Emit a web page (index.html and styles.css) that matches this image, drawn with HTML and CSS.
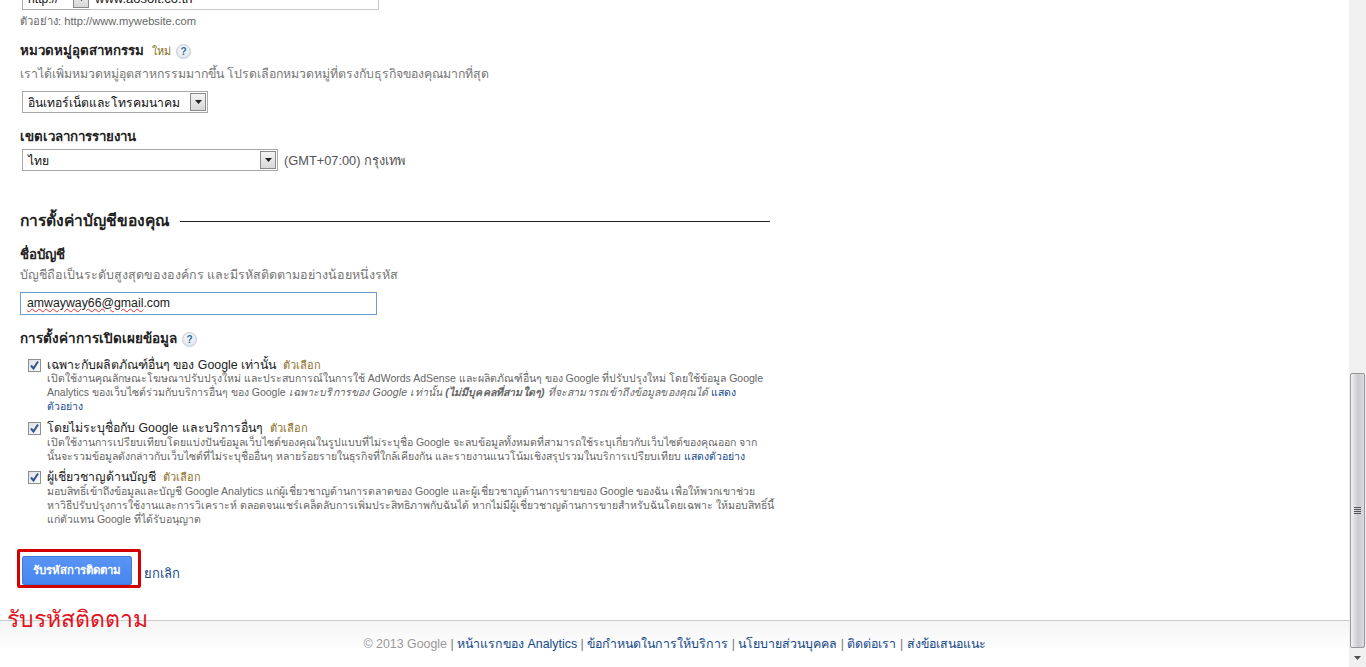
FILE: index.html
```html
<!DOCTYPE html>
<html lang="th">
<head>
<meta charset="utf-8">
<title>Google Analytics</title>
<link rel="stylesheet" href="styles.css">
</head>
<body>
<div class="window">
  <div class="page">
    <main class="content">
      <div class="url-row">
        <div class="select select-proto"><span class="select-text">http://</span><span class="arrow"><svg width="7" height="4" viewBox="0 0 7 4"><path d="M0 0h7L3.5 4z" fill="#222"/></svg></span></div>
        <div class="url-input">www.aosoit.co.th</div>
      </div>
      <p class="example">ตัวอย่าง: http://www.mywebsite.com</p>

      <div class="field-title title-industry"><b>หมวดหมู่อุตสาหกรรม</b><span class="tag-new">ใหม่</span><span class="help">?</span></div>
      <p class="desc">เราได้เพิ่มหมวดหมู่อุตสาหกรรมมากขึ้น โปรดเลือกหมวดหมู่ที่ตรงกับธุรกิจของคุณมากที่สุด</p>
      <div class="select select-industry"><span class="select-text">อินเทอร์เน็ตและโทรคมนาคม</span><span class="arrow"><svg width="7" height="4" viewBox="0 0 7 4"><path d="M0 0h7L3.5 4z" fill="#222"/></svg></span></div>

      <div class="field-title title-zone"><b>เขตเวลาการรายงาน</b></div>
      <div class="zone-row">
        <div class="select select-zone"><span class="select-text">ไทย</span><span class="arrow"><svg width="7" height="4" viewBox="0 0 7 4"><path d="M0 0h7L3.5 4z" fill="#222"/></svg></span></div>
        <span class="zone-label">(GMT+07:00) กรุงเทพ</span>
      </div>

      <div class="section-head"><h2>การตั้งค่าบัญชีของคุณ</h2><span class="rule"></span></div>

      <div class="field-title title-account"><b>ชื่อบัญชี</b></div>
      <p class="desc desc-account">บัญชีถือเป็นระดับสูงสุดขององค์กร และมีรหัสติดตามอย่างน้อยหนึ่งรหัส</p>
      <div class="account-input"><span class="misspelt">amwayway66@gmail</span>.com</div>

      <div class="field-title title-share"><b>การตั้งค่าการเปิดเผยข้อมูล</b><span class="help">?</span></div>

      <div class="option option-first">
        <span class="check"><svg width="11" height="11" viewBox="0 0 11 11"><path d="M2 5.5l2.5 3L9 1.5" fill="none" stroke="#34558f" stroke-width="2"/></svg></span>
        <div class="option-body">
          <div class="option-title">เฉพาะกับผลิตภัณฑ์อื่นๆ ของ Google เท่านั้น<span class="tag">ตัวเลือก</span></div>
          <p class="option-text">เปิดใช้งานคุณลักษณะโฆษณาปรับปรุงใหม่ และประสบการณ์ในการใช้ AdWords AdSense และผลิตภัณฑ์อื่นๆ ของ Google ที่ปรับปรุงใหม่ โดยใช้ข้อมูล Google<br>Analytics ของเว็บไซต์ร่วมกับบริการอื่นๆ ของ Google <i>เฉพาะบริการของ Google เท่านั้น <b>(ไม่มีบุคคลที่สามใดๆ)</b> ที่จะสามารถเข้าถึงข้อมูลของคุณได้</i> <a href="#">แสดง<br>ตัวอย่าง</a></p>
        </div>
      </div>
      <div class="option option-second">
        <span class="check"><svg width="11" height="11" viewBox="0 0 11 11"><path d="M2 5.5l2.5 3L9 1.5" fill="none" stroke="#34558f" stroke-width="2"/></svg></span>
        <div class="option-body">
          <div class="option-title">โดยไม่ระบุชื่อกับ Google และบริการอื่นๆ<span class="tag">ตัวเลือก</span></div>
          <p class="option-text">เปิดใช้งานการเปรียบเทียบโดยแบ่งปันข้อมูลเว็บไซต์ของคุณในรูปแบบที่ไม่ระบุชื่อ Google จะลบข้อมูลทั้งหมดที่สามารถใช้ระบุเกี่ยวกับเว็บไซต์ของคุณออก จาก<br>นั้นจะรวมข้อมูลดังกล่าวกับเว็บไซต์ที่ไม่ระบุชื่ออื่นๆ หลายร้อยรายในธุรกิจที่ใกล้เคียงกัน และรายงานแนวโน้มเชิงสรุปรวมในบริการเปรียบเทียบ <a href="#">แสดงตัวอย่าง</a></p>
        </div>
      </div>
      <div class="option option-third">
        <span class="check"><svg width="11" height="11" viewBox="0 0 11 11"><path d="M2 5.5l2.5 3L9 1.5" fill="none" stroke="#34558f" stroke-width="2"/></svg></span>
        <div class="option-body">
          <div class="option-title">ผู้เชี่ยวชาญด้านบัญชี<span class="tag">ตัวเลือก</span></div>
          <p class="option-text">มอบสิทธิ์เข้าถึงข้อมูลและบัญชี Google Analytics แก่ผู้เชี่ยวชาญด้านการตลาดของ Google และผู้เชี่ยวชาญด้านการขายของ Google ของฉัน เพื่อให้พวกเขาช่วย<br>หาวิธีปรับปรุงการใช้งานและการวิเคราะห์ ตลอดจนแชร์เคล็ดลับการเพิ่มประสิทธิภาพกับฉันได้ หากไม่มีผู้เชี่ยวชาญด้านการขายสำหรับฉันโดยเฉพาะ ให้มอบสิทธิ์นี้<br>แก่ตัวแทน Google ที่ได้รับอนุญาต</p>
        </div>
      </div>

      <div class="actions">
        <div class="highlight"><button class="primary" type="button">รับรหัสการติดตาม</button></div>
        <a class="cancel" href="#">ยกเลิก</a>
      </div>
    </main>
    <footer class="footer">
      <span class="copy">© 2013 Google</span> | <a href="#">หน้าแรกของ Analytics</a> | <a href="#">ข้อกำหนดในการให้บริการ</a> | <a href="#">นโยบายส่วนบุคคล</a> | <a href="#">ติดต่อเรา</a> | <a href="#">ส่งข้อเสนอแนะ</a>
    </footer>
    <div class="annotation">รับรหัสติดตาม</div>
  </div>
  <div class="scrollbar">
    <div class="track"><div class="thumb"><span class="grip"></span></div></div>
    <div class="scroll-btn"><svg width="7" height="4" viewBox="0 0 7 4"><path d="M0 0h7L3.5 4z" fill="#505050"/></svg></div>
  </div>
</div>
</body>
</html>
```
FILE: styles.css
```css
* { box-sizing: border-box; }
html, body { margin: 0; height: 100%; overflow: hidden; background: #fff; }
body { font-family: "Liberation Sans", "Noto Sans", Arial, sans-serif; color: #333; }
.window { display: flex; width: 1366px; height: 667px; }
.page { position: relative; flex: 1; display: flex; flex-direction: column; overflow: hidden; }
.content { flex: 1; padding-left: 20px; margin-top: -12px; }
p { margin: 0; }
a { color: #15498a; text-decoration: none; }

.url-row { display: flex; margin-left: 2px; height: 22px; }
.select { display: flex; align-items: stretch; height: 22px; border: 1px solid #a9a9a9; background: #fff; font-size: 12.2px; color: #111; }
.select-text { flex: 1; padding-left: 5px; line-height: 22px; white-space: nowrap; overflow: hidden; }
.select-proto .select-text { line-height: 20px; }
.arrow { flex: none; width: 16px; margin: 1px; display: flex; align-items: center; justify-content: center; background: linear-gradient(#f4f4f4, #d8d8d8); border: 1px solid #8a8a8a; }
.select-proto { width: 68px; border-right: 0; }
.url-input { width: 289px; height: 22px; border: 1px solid #c8c8c8; border-left: 0; padding-left: 5px; font-size: 13px; line-height: 20px; color: #222; }
.example { margin-top: 5px; font-size: 11.2px; line-height: 13px; color: #666; }

.field-title { font-size: 13.3px; line-height: 18px; color: #222; display: flex; align-items: center; }
.field-title b { font-weight: 700; }
.title-industry { margin-top: 14px; }
.tag-new { margin-left: 8px; font-size: 10.8px; color: #8a6d1c; }
.help { width: 15px; height: 15px; margin-left: 5px; border-radius: 50%; border: 1px solid #c4ccd6; background: radial-gradient(circle at 50% 35%, #fff, #d5dde6); color: #2a6a9e; font-size: 10px; font-weight: 700; line-height: 13px; text-align: center; }
.desc { margin-top: 6px; font-size: 12.3px; line-height: 16px; color: #777; }
.select-industry { width: 186px; margin: 9px 0 0 2px; }
.title-zone { margin-top: 15px; }
.zone-row { display: flex; align-items: center; margin: 3px 0 0 2px; }
.select-zone { width: 256px; }
.zone-label { margin-left: 6px; font-size: 12.8px; color: #555; }

.section-head { display: flex; align-items: center; margin-top: 41px; width: 750px; }
.section-head h2 { margin: 0; font-size: 15.6px; line-height: 18px; font-weight: 700; color: #222; }
.rule { flex: 1; height: 1px; margin-left: 11px; background: #222; }
.title-account { margin-top: 16px; }
.desc-account { margin-top: 3px; font-size: 12.5px; }
.account-input { width: 357px; height: 23px; margin-top: 9px; border: 1px solid #6d9bd1; padding-left: 6px; font-size: 12.3px; line-height: 21px; color: #222; }
.misspelt { text-decoration: underline wavy #d33 1px; }
.title-share { margin-top: 15px; font-size: 13.5px; }

.option { display: flex; margin-left: 8px; width: 742px; }
.option-first { margin-top: 9px; }
.option-second { margin-top: 8px; }
.option-third { margin-top: 7px; }
.check { flex: none; width: 13px; height: 13px; margin: 2px 6px 0 0; border: 1px solid #8e8f8f; background: linear-gradient(135deg, #dfe1e5, #fbfbfc); display: flex; align-items: center; justify-content: center; }
.option-second .check, .option-third .check { margin-top: 1px; }
.option-body { flex: 1; min-width: 0; }
.option-title { font-size: 12.35px; line-height: 16px; margin-bottom: -2px; color: #222; white-space: nowrap; }
.option-second .option-title, .option-third .option-title { line-height: 14px; margin-bottom: 0; }
.tag { margin-left: 7px; font-size: 11px; color: #8a6d1c; }
.option-text { font-size: 10.5px; line-height: 14px; color: #666; white-space: nowrap; }
.option-text i { letter-spacing: 0.15px; }

.actions { display: flex; align-items: center; margin: 23px 0 0 -3px; }
.highlight { width: 124px; height: 39px; padding: 4px 0 0 2px; border: 3px solid #d40000; border-radius: 2px; }
.primary { display: block; width: 110px; height: 29px; padding: 0; border: 1px solid #3d79d6; border-radius: 2px; background: linear-gradient(#5a95f5, #4685ee); color: #fff; font: 700 11.4px/1 "Liberation Sans", "Noto Sans", sans-serif; }
.cancel { margin-left: 3px; font-size: 13px; padding-top: 9px; }

.footer { flex: none; height: 47px; border-top: 1px solid #ccc; background: linear-gradient(#f5f5f5, #fff 70%); padding-top: 15px; text-align: center; font-size: 12.4px; line-height: 16px; color: #777; }
.copy { color: #999; }
.annotation { position: absolute; left: 7px; top: 602px; font-family: "Noto Sans", sans-serif; font-size: 23px; line-height: 32px; color: #e0141c; white-space: nowrap; }

.scrollbar { flex: none; width: 17px; display: flex; flex-direction: column; background: #f0f0f0; }
.track { flex: 1; display: flex; flex-direction: column; justify-content: flex-end; }
.thumb { height: 275px; margin: 0 0 0 1px; width: 15px; border: 1px solid #979797; border-radius: 2px; background: linear-gradient(90deg, #f1f1f2, #c9cace 55%, #dcdde0); display: flex; align-items: center; justify-content: center; }
.grip { width: 7px; height: 8px; background: repeating-linear-gradient(#555 0 1px, transparent 1px 2px); }
.scroll-btn { flex: none; height: 19px; display: flex; align-items: center; justify-content: center; }
```
